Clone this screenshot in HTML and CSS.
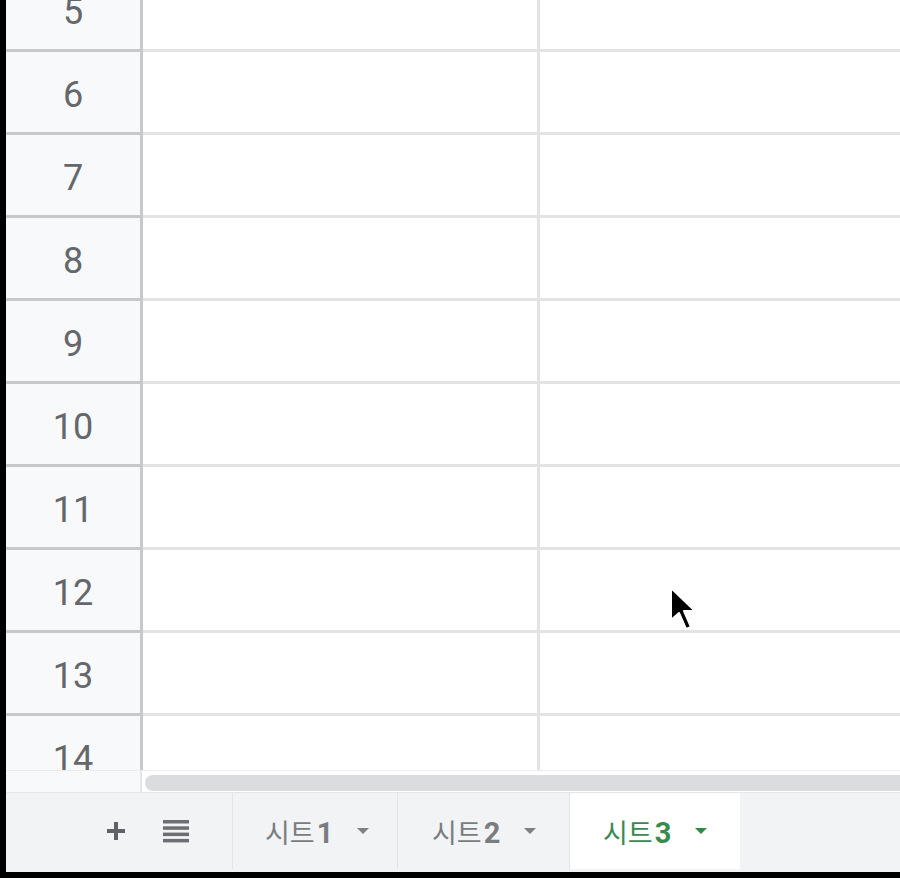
FILE: index.html
```html
<!DOCTYPE html>
<html lang="ko">
<head>
    <meta charset="UTF-8">
    <title>시트3</title>
    <link rel="stylesheet" href="styles.css">
</head>
<body>
    <div class="sheet">
        <div class="grid">
            <div class="rows">
                <div class="row"><div class="head">5</div><div class="cell"></div><div class="cell last"></div></div>
                <div class="row"><div class="head">6</div><div class="cell"></div><div class="cell last"></div></div>
                <div class="row"><div class="head">7</div><div class="cell"></div><div class="cell last"></div></div>
                <div class="row"><div class="head">8</div><div class="cell"></div><div class="cell last"></div></div>
                <div class="row"><div class="head">9</div><div class="cell"></div><div class="cell last"></div></div>
                <div class="row"><div class="head">10</div><div class="cell"></div><div class="cell last"></div></div>
                <div class="row"><div class="head">11</div><div class="cell"></div><div class="cell last"></div></div>
                <div class="row"><div class="head">12</div><div class="cell"></div><div class="cell last"></div></div>
                <div class="row"><div class="head">13</div><div class="cell"></div><div class="cell last"></div></div>
                <div class="row"><div class="head">14</div><div class="cell"></div><div class="cell last"></div></div>
            </div>
        </div>
        <div class="hscroll">
            <div class="corner"></div>
            <div class="track"><div class="thumb"></div></div>
        </div>
        <div class="tabbar">
            <div class="tools">
                <svg class="plus" width="22" height="22" viewBox="0 0 22 22">
                    <path d="M11 2v18M2 11h18" stroke="#5f6368" stroke-width="4"/>
                </svg>
                <svg class="list" width="26" height="24" viewBox="0 0 26 24">
                    <rect x="0" y="1" width="26" height="3.5" fill="#6b6e72"/>
                    <rect x="0" y="7.3" width="26" height="3.5" fill="#6b6e72"/>
                    <rect x="0" y="13.6" width="26" height="3.5" fill="#6b6e72"/>
                    <rect x="0" y="19.9" width="26" height="3.5" fill="#6b6e72"/>
                </svg>
            </div>
            <div class="tab t1"><span class="name">시트<b>1</b></span><span class="caret"></span></div>
            <div class="tab t2"><span class="name">시트<b>2</b></span><span class="caret"></span></div>
            <div class="tab t3 active"><span class="name">시트<b>3</b></span><span class="caret"></span></div>
        </div>
        <svg class="cursor" width="30" height="48" viewBox="0 0 30 48">
            <path d="M2 2 L2 34 L10 27 L17 43 L22 41 L15 25 L26 25 Z" fill="#000" stroke="#fff" stroke-width="2" stroke-linejoin="round"/>
        </svg>
    </div>
</body>
</html>
```

FILE: styles.css
```css
html, body {
    margin: 0;
    padding: 0;
    background: #000;
}

.sheet {
    position: relative;
    width: 894px;
    height: 872px;
    margin-left: 6px;
    background: #fff;
    display: flex;
    flex-direction: column;
    overflow: hidden;
    font-family: Roboto, "Noto Sans CJK KR", sans-serif;
}

.grid {
    height: 770px;
    overflow: hidden;
    flex: none;
}

.rows {
    margin-top: -31px;
}

.row {
    display: flex;
    height: 83px;
}

.head {
    width: 134px;
    flex: none;
    background: #f8f9fa;
    border-right: 3px solid #c6c8ca;
    border-bottom: 3px solid #c6c8ca;
    box-sizing: border-box;
    width: 137px;
    height: 83px;
    padding-top: 5px;
    display: flex;
    align-items: center;
    justify-content: center;
    font-size: 36px;
    color: #64676b;
}

.cell {
    width: 397px;
    flex: none;
    height: 83px;
    box-sizing: border-box;
    border-right: 3px solid #e3e3e3;
    border-bottom: 3px solid #e3e3e3;
}

.cell.last {
    flex: 1;
    border-right: none;
}

.hscroll {
    height: 22px;
    flex: none;
    display: flex;
    border-top: 1px solid #ececec;
    box-sizing: border-box;
}

.corner {
    width: 134px;
    background: #f8f9fa;
    border-right: 2px solid #e6e6e6;
}

.track {
    flex: 1;
    padding: 4px 0 0 3px;
}

.thumb {
    height: 16px;
    background: #dadce0;
    border-radius: 8px 0 0 8px;
}

.tabbar {
    height: 80px;
    flex: none;
    display: flex;
    background: #f1f3f4;
    border-top: 1px solid #e4e6e8;
    box-sizing: border-box;
    padding-bottom: 3px;
}

.tools {
    width: 227px;
    display: flex;
    align-items: center;
    padding-left: 99px;
    gap: 36px;
    box-sizing: border-box;
    border-right: 1px solid #e2e4e6;
}

.tab {
    display: flex;
    align-items: center;
    padding-left: 32px;
    box-sizing: border-box;
    border-right: 1px solid #e2e4e6;
    color: #7a7d80;
    font-size: 27px;
}

.tab.t1 { width: 165px; }
.tab.t2 { width: 172px; padding-left: 34px; }
.tab.t3 { width: 170px; padding-left: 33px; }

.tab .name b {
    font-weight: 700;
    font-size: 29px;
    margin-left: 2px;
}

.caret {
    width: 0;
    height: 0;
    margin-left: 24px;
    border-left: 6px solid transparent;
    border-right: 6px solid transparent;
    border-top: 6px solid #7d8084;
}

.tab.active {
    background: #fff;
    color: #3a8a50;
    border-right: none;
}

.tab.active .caret {
    border-top-color: #2e8b47;
}

.cursor {
    position: absolute;
    left: 663px;
    top: 586px;
}
```
